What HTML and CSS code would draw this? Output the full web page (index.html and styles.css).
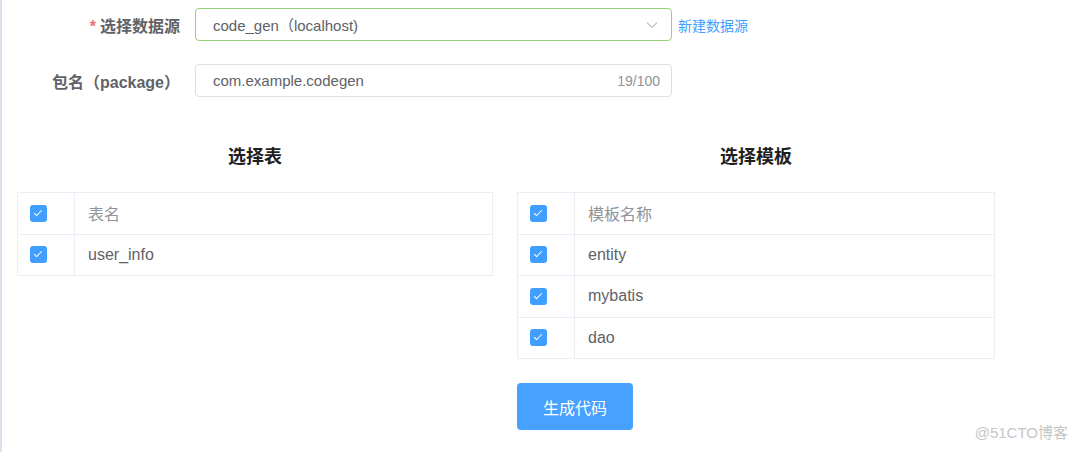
FILE: index.html
```html
<!DOCTYPE html>
<html>
<head>
	<meta charset="utf-8">
	<title>代码生成</title>
	<link rel="stylesheet" href="styles.css">
</head>
<body>
<div class="page">
	<div class="form">
		<div class="form-item">
			<label class="form-label required">选择数据源</label>
			<div class="select">
				<span class="value">code_gen（localhost)</span>
				<svg class="arrow" width="14" height="14" viewBox="0 0 14 14">
					<path d="M2 4.5 L7 9.5 L12 4.5" fill="none" stroke="#c0c4cc" stroke-width="1.1"/>
				</svg>
			</div>
			<a href="#" class="link">新建数据源</a>
		</div>
		<div class="form-item">
			<label class="form-label">包名（package）</label>
			<div class="input">
				<span class="value">com.example.codegen</span>
				<span class="count">19/100</span>
			</div>
		</div>
	</div>

	<div class="panels">
		<div class="panel">
			<h3>选择表</h3>
			<div class="table">
				<div class="row head">
					<div class="cell check"><i class="checkbox"></i></div>
					<div class="cell">表名</div>
				</div>
				<div class="row">
					<div class="cell check"><i class="checkbox"></i></div>
					<div class="cell">user_info</div>
				</div>
			</div>
		</div>
		<div class="panel">
			<h3>选择模板</h3>
			<div class="table">
				<div class="row head">
					<div class="cell check"><i class="checkbox"></i></div>
					<div class="cell">模板名称</div>
				</div>
				<div class="row">
					<div class="cell check"><i class="checkbox"></i></div>
					<div class="cell">entity</div>
				</div>
				<div class="row">
					<div class="cell check"><i class="checkbox"></i></div>
					<div class="cell">mybatis</div>
				</div>
				<div class="row">
					<div class="cell check"><i class="checkbox"></i></div>
					<div class="cell">dao</div>
				</div>
			</div>
			<button class="button">生成代码</button>
		</div>
	</div>

	<div class="watermark">@51CTO博客</div>
</div>
</body>
</html>
```

FILE: styles.css
```css
* {
	margin: 0;
	padding: 0;
	box-sizing: border-box;
}
body {
	font-family: "Liberation Sans", "Noto Sans CJK SC", sans-serif;
	color: #606266;
	background: #fff;
}
.page {
	position: relative;
	height: 452px;
	border-left: 2px solid #dbe2ed;
	padding-top: 8px;
	overflow: hidden;
}

/* 表单 */
.form-item {
	display: flex;
	align-items: center;
	height: 33px;
	margin-bottom: 23px;
}
.form-label {
	width: 193px;
	padding-right: 15px;
	text-align: right;
	font-size: 16px;
	font-weight: bold;
	color: #606266;
}
.form-label.required:before {
	content: "*";
	color: #f56c6c;
	margin-right: 4px;
}
.select,
.input {
	width: 477px;
	height: 33px;
	display: flex;
	align-items: center;
	justify-content: space-between;
	border: 1px solid #dcdfe6;
	border-radius: 4px;
	padding: 0 11px 0 17px;
	font-size: 15px;
	color: #606266;
}
.select {
	border-color: #95d475;
	padding-right: 12px;
}
.count {
	font-size: 14px;
	color: #909399;
}
.link {
	margin-left: 6px;
	font-size: 14px;
	color: #409eff;
	text-decoration: none;
}

/* 两栏 */
.panels {
	display: grid;
	grid-template-columns: 476px 478px;
	column-gap: 24px;
	padding-left: 15px;
	margin-top: 48px;
}
.panel h3 {
	text-align: center;
	font-size: 18px;
	line-height: 24px;
	color: #1f1f1f;
	margin-bottom: 23px;
}
.table {
	border: 1px solid #ebeef5;
	border-bottom: none;
}
.row {
	display: flex;
	height: 41.5px;
	border-bottom: 1px solid #ebeef5;
}
.cell {
	display: flex;
	align-items: center;
	padding-left: 13px;
	font-size: 16px;
	color: #606266;
}
.row.head .cell {
	color: #909399;
}
.cell.check {
	width: 57px;
	padding-left: 12px;
	border-right: 1px solid #ebeef5;
}
.checkbox {
	display: block;
	position: relative;
	width: 17px;
	height: 17px;
	border-radius: 3px;
	background: #409eff;
}
.checkbox:after {
	content: "";
	position: absolute;
	left: 6px;
	top: 3px;
	width: 3px;
	height: 7px;
	border: 1.5px solid #fff;
	border-left: 0;
	border-top: 0;
	transform: rotate(45deg);
}
.button {
	display: block;
	margin-top: 24px;
	width: 116px;
	height: 47px;
	border: none;
	border-radius: 4px;
	background: #47a1ff;
	color: #fff;
	font-family: inherit;
	font-size: 16px;
	cursor: pointer;
}

.watermark {
	position: absolute;
	right: 12px;
	bottom: 10px;
	font-size: 15px;
	color: #c6c6c6;
}
```
